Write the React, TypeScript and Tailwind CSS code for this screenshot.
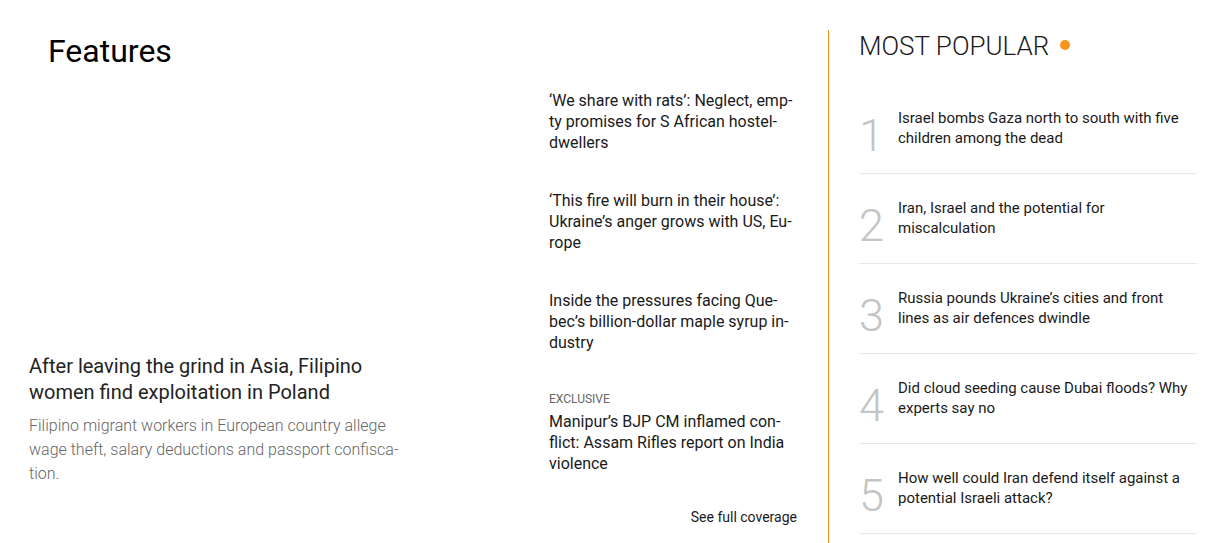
import React from "react";

const S = "\u00AD";

const middle = [
  { label: "", title: `‘We share with rats’: Neglect, emp${S}ty promises for S African hostel-dwellers` },
  { label: "", title: `‘This fire will burn in their house’: Ukraine’s anger grows with US, Eu${S}rope` },
  { label: "", title: `Inside the pressures facing Que${S}bec’s billion-dollar maple syrup in${S}dustry` },
  { label: "EXCLUSIVE", title: `Manipur’s BJP CM inflamed con${S}flict: Assam Rifles report on India violence` },
];

const popular = [
  "Israel bombs Gaza north to south with five children among the dead",
  "Iran, Israel and the potential for miscalculation",
  "Russia pounds Ukraine’s cities and front lines as air defences dwindle",
  "Did cloud seeding cause Dubai floods? Why experts say no",
  "How well could Iran defend itself against a potential Israeli attack?",
];

export default function App() {
  return (
    <div
      className="flex w-[1225px] bg-white text-[#222]"
      style={{ fontFamily: "Roboto, 'Liberation Sans', sans-serif" }}
      lang="en"
    >
      <div className="flex w-[828px] shrink-0">
        <div className="w-[520px] shrink-0 pl-[29px] pt-[35px]">
          <h2 className="pl-[19px] text-[32px] leading-none font-normal text-black">Features</h2>
          <div className="mt-[286px] w-[380px]">
            <h3 className="text-[20px] leading-[26px] font-normal text-[#222]">
              After leaving the grind in Asia, Filipino women find exploitation in Poland
            </h3>
            <p className="mt-[9px] text-[16px] leading-[24px] font-light text-[#666]">
              {`Filipino migrant workers in European country allege wage theft, salary deductions and passport confisca${S}tion.`}
            </p>
          </div>
        </div>
        <div className="ml-[29px] w-[248px] shrink-0 pt-[91px]">
          {middle.map((m, i) => (
            <div key={i} className={i === 0 ? "" : "mt-[37.6px]"}>
              {m.label && (
                <div className="mb-[5px] text-[12px] leading-[16px] uppercase text-[#666]">{m.label}</div>
              )}
              <div className="text-[16px] leading-[20.8px] text-[#1a1a1a]">{m.title}</div>
            </div>
          ))}
          <div className="mt-[32.7px] text-right text-[14px] leading-[20px] text-[#1a1a1a]">See full coverage</div>
        </div>
      </div>
      <div className="mt-[30px] w-[369px] shrink-0 border-l border-[#f7941d] pl-[30px] pt-[3px] pb-[20px]">
        <div className="flex items-center h-[26px]">
          <h2 className="text-[26px] leading-none font-light text-[#1a1a1a]">MOST POPULAR</h2>
          <span className="ml-[11px] mt-[-2px] block h-[10px] w-[10px] rounded-full bg-[#f7941d]" />
        </div>
        <ol className="mt-[25px]">
          {popular.map((p, i) => (
            <li key={i} className="flex items-start border-b border-[#e8e8e8] pt-[24px] pb-[25px]">
              <span className="mt-[5px] h-[35px] w-[39px] shrink-0 text-[45px] leading-none font-light text-[#c4c4c4]">
                {i + 1}
              </span>
              <span className="text-[15px] leading-[20px] text-[#1a1a1a]">{p}</span>
            </li>
          ))}
        </ol>
      </div>
    </div>
  );
}
